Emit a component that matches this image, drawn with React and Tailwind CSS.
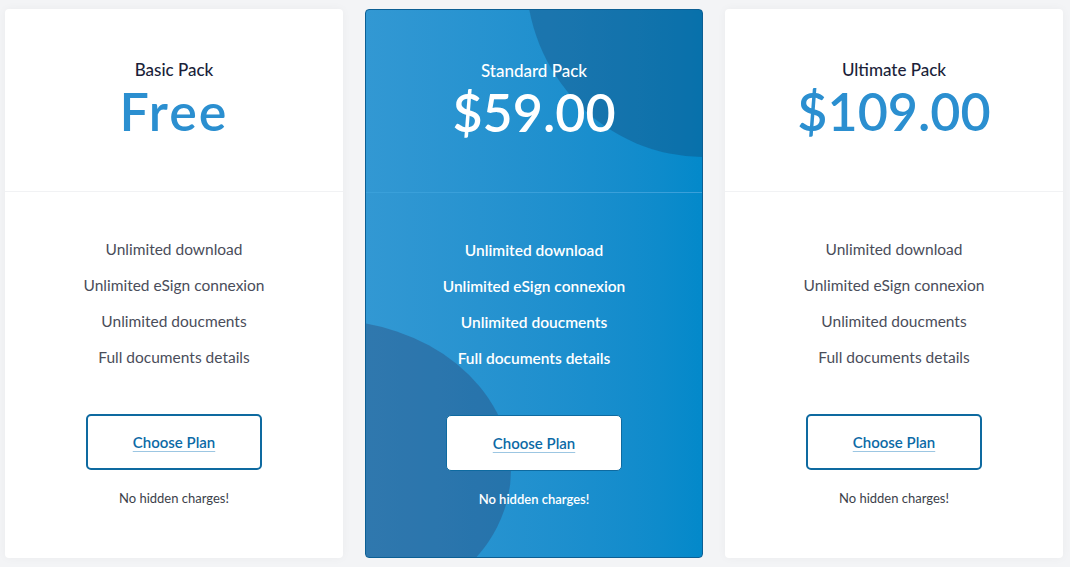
import React from "react";

const features = [
  "Unlimited download",
  "Unlimited eSign connexion",
  "Unlimited doucments",
  "Full documents details",
];

function Card({ title, price, featured }) {
  return (
    <div
      className={
        "relative w-[338px] h-[549px] rounded-[4px] overflow-hidden flex flex-col " +
        (featured
          ? "bg-gradient-to-r from-[#3298d3] to-[#0389ca] border border-[#0c5f94]"
          : "bg-white shadow-[0_0_10px_rgba(0,0,0,0.04)]")
      }
    >
      {featured && (
        <svg
          className="absolute inset-0"
          width="338"
          height="549"
          viewBox="0 0 338 549"
        >
          <ellipse cx="338" cy="-35" rx="178" ry="182" fill="#123d6a" opacity="0.32" />
          <ellipse cx="-40" cy="460" rx="185" ry="150" fill="#2a2f5a" opacity="0.3" />
        </svg>
      )}
      <div
        className={
          "relative h-[183px] flex flex-col items-center pt-[51px] border-b " +
          (featured ? "border-[#3aa0da]" : "border-[#f1f2f4]")
        }
      >
        <div
          className={
            "text-[17px] leading-[20px] font-medium " +
            (featured ? "text-white" : "text-[#1b1f3a]")
          }
        >
          {title}
        </div>
        <div
          className={
            "text-[52px] leading-[60px] font-semibold mt-[1px] " +
            (featured ? "text-white" : "text-[#2b8fd0]") +
            (price === "Free" ? " tracking-[2px]" : "")
          }
        >
          {price}
        </div>
      </div>
      <div className="relative flex flex-col items-center pt-[47px]">
        {features.map((f) => (
          <div
            key={f}
            className={
              "text-[15.5px] leading-[20px] h-[36px] " +
              (featured ? "text-white font-semibold" : "text-[#4a4d5a]")
            }
          >
            {f}
          </div>
        ))}
        <button
          className={
            "mt-[31px] w-[176px] h-[56px] rounded-[5px] flex items-center justify-center " +
            (featured
              ? "bg-white border border-[#0e6aa0]"
              : "bg-white border-2 border-[#0e6aa0]")
          }
        >
          <span className="text-[15px] font-semibold text-[#0c6aa6] underline decoration-[#9cc6e2] decoration-1 underline-offset-[3px]">
            Choose Plan
          </span>
        </button>
        <div
          className={
            "mt-[19px] text-[13px] leading-[18px] " +
            (featured ? "text-white font-semibold" : "text-[#3c3f4a]")
          }
        >
          No hidden charges!
        </div>
      </div>
    </div>
  );
}

export default function App() {
  return (
    <div
      className="w-[1070px] h-[567px] bg-[#f3f4f6] flex gap-[22px] pl-[5px] pt-[9px]"
      style={{ fontFamily: "Lato, 'Open Sans', sans-serif" }}
    >
      <Card title="Basic Pack" price="Free" />
      <Card title="Standard Pack" price="$59.00" featured />
      <Card title="Ultimate Pack" price="$109.00" />
    </div>
  );
}
